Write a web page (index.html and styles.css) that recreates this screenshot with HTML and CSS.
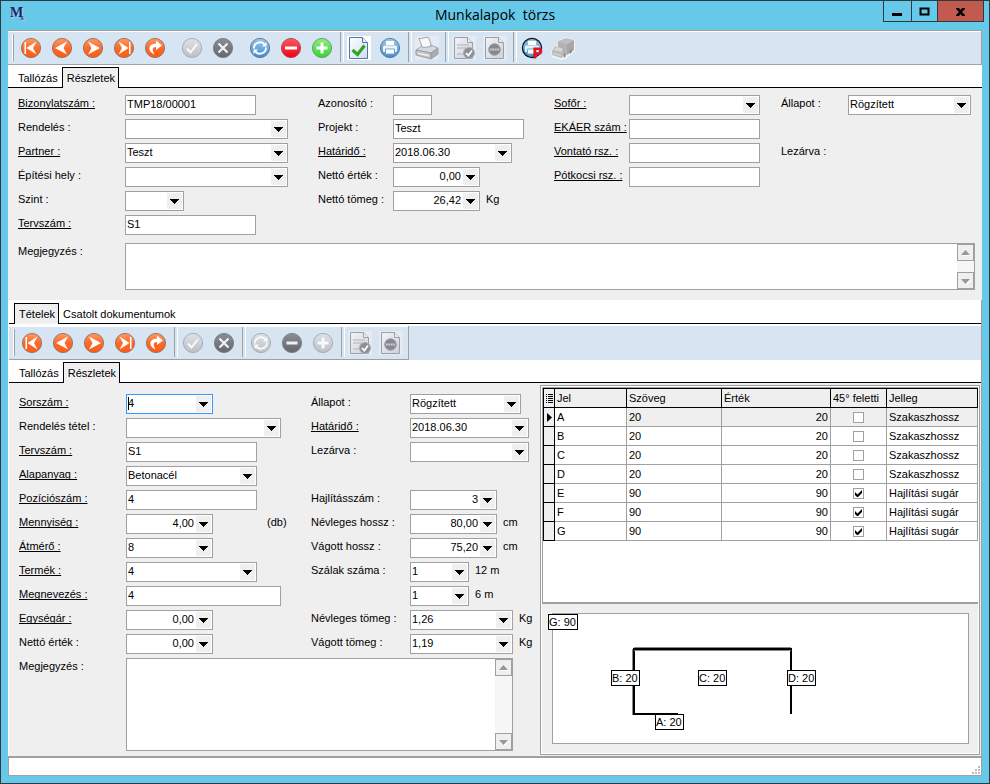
FILE: index.html
```html
<!DOCTYPE html>
<html lang="hu">
<head>
  <meta charset="UTF-8">
  <meta name="viewport" content="width=device-width, initial-scale=1.0">
  <title>Munkalapok törzs</title>
  <link rel="stylesheet" href="styles.css">
</head>
<body>
<!-- Icon sprite -->
<svg class="sprite" width="0" height="0" aria-hidden="true">
  <defs>
    <linearGradient id="g-orange" x1="0" y1="0" x2="0" y2="1"><stop offset="0" stop-color="#ff9a62"/><stop offset="0.5" stop-color="#fb6a2c"/><stop offset="1" stop-color="#ff5a10"/></linearGradient>
    <linearGradient id="g-light" x1="0" y1="0" x2="0" y2="1"><stop offset="0" stop-color="#dfe2e6"/><stop offset="1" stop-color="#bcc0c5"/></linearGradient>
    <linearGradient id="g-dark" x1="0" y1="0" x2="0" y2="1"><stop offset="0" stop-color="#8b8f95"/><stop offset="1" stop-color="#63676d"/></linearGradient>
    <linearGradient id="g-blue" x1="0" y1="0" x2="0" y2="1"><stop offset="0" stop-color="#9cc8ef"/><stop offset="1" stop-color="#3f8bd3"/></linearGradient>
    <linearGradient id="g-red" x1="0" y1="0" x2="0" y2="1"><stop offset="0" stop-color="#ff5b66"/><stop offset="1" stop-color="#f2000f"/></linearGradient>
    <linearGradient id="g-green" x1="0" y1="0" x2="0" y2="1"><stop offset="0" stop-color="#8fee84"/><stop offset="1" stop-color="#34d332"/></linearGradient>
    <linearGradient id="g-page" x1="0" y1="0" x2="1" y2="1"><stop offset="0" stop-color="#ffffff"/><stop offset="1" stop-color="#cfdcf0"/></linearGradient>
    <linearGradient id="g-gray-page" x1="0" y1="0" x2="1" y2="1"><stop offset="0" stop-color="#f2f4f7"/><stop offset="1" stop-color="#cdd1d8"/></linearGradient>
  </defs>
  <symbol id="i-first" viewBox="0 0 24 24">
    <circle cx="12" cy="12" r="9.6" fill="url(#g-orange)" stroke="#8f7263" stroke-width="0.9"/>
    <path d="M5.500 6h1.500v12H5.500zM7.500 12l10-6.500-3.500 6.500 3.500 6.500z" fill="#fff"/>
  </symbol>
  <symbol id="i-prev" viewBox="0 0 24 24">
    <circle cx="12" cy="12" r="9.6" fill="url(#g-orange)" stroke="#8f7263" stroke-width="0.9"/>
    <path d="M5 12l12-6.500-3.500 6.500 3.500 6.500z" fill="#fff"/>
  </symbol>
  <symbol id="i-next" viewBox="0 0 24 24">
    <circle cx="12" cy="12" r="9.6" fill="url(#g-orange)" stroke="#8f7263" stroke-width="0.9"/>
    <path d="M19 12L7 5.500l3.500 6.500L7 18.500z" fill="#fff"/>
  </symbol>
  <symbol id="i-last" viewBox="0 0 24 24">
    <circle cx="12" cy="12" r="9.6" fill="url(#g-orange)" stroke="#8f7263" stroke-width="0.9"/>
    <path d="M17 6h1.500v12H17zM16.500 12L6.500 5.500 10 12l-3.500 6.500z" fill="#fff"/>
  </symbol>
  <symbol id="i-redo" viewBox="0 0 24 24">
    <circle cx="12" cy="12" r="9.6" fill="url(#g-orange)" stroke="#8f7263" stroke-width="0.9"/>
    <path d="M13 4.500l6 5-6 4.500v-3c-4 0-4 3-1.500 7.500C5 16 4 8 13 7.500z" fill="#fff"/>
  </symbol>
  <symbol id="i-ok" viewBox="0 0 24 24">
    <circle cx="12" cy="12" r="9.6" fill="url(#g-light)" stroke="#a3a8ae" stroke-width="0.9"/>
    <path d="M7 12.500l3.500 4L17 8" fill="none" stroke="#f8fafc" stroke-width="2"/>
  </symbol>
  <symbol id="i-cancel" viewBox="0 0 24 24">
    <circle cx="12" cy="12" r="9.600" fill="url(#g-dark)" stroke="#777b80" stroke-width="0.9"/>
    <path d="M7.500 7.500l9 9M16.500 7.500l-9 9" fill="none" stroke="#eef3f9" stroke-width="2.200"/>
  </symbol>
  <symbol id="i-refresh" viewBox="0 0 24 24">
    <circle cx="12" cy="12" r="9.600" fill="url(#g-blue)" stroke="#5b7085" stroke-width="0.9"/>
    <path d="M6 12.500a6 6 0 0 1 11-3.500M18 11.500a6 6 0 0 1-11 3.500" fill="none" stroke="#fff" stroke-width="1.800"/>
    <path d="M18.500 6v4.500H14zM5.500 18v-4.500H10z" fill="#fff"/>
  </symbol>
  <symbol id="i-refresh-off" viewBox="0 0 24 24">
    <circle cx="12" cy="12" r="9.600" fill="url(#g-light)" stroke="#a3a8ae" stroke-width="0.9"/>
    <path d="M6 12.500a6 6 0 0 1 11-3.500M18 11.500a6 6 0 0 1-11 3.500" fill="none" stroke="#f8fafc" stroke-width="1.800"/>
    <path d="M18.500 6v4.500H14zM5.500 18v-4.500H10z" fill="#f8fafc"/>
  </symbol>
  <symbol id="i-minus" viewBox="0 0 24 24">
    <circle cx="12" cy="12" r="9.600" fill="url(#g-red)" stroke="#9a4a50" stroke-width="0.9"/>
    <path d="M6 10.500h12v3H6z" fill="#fff"/>
  </symbol>
  <symbol id="i-minus-off" viewBox="0 0 24 24">
    <circle cx="12" cy="12" r="9.600" fill="url(#g-dark)" stroke="#777b80" stroke-width="0.9"/>
    <path d="M6.500 10.500h11v3h-11z" fill="#eef3f9"/>
  </symbol>
  <symbol id="i-plus" viewBox="0 0 24 24">
    <circle cx="12" cy="12" r="9.600" fill="url(#g-green)" stroke="#5d9a5a" stroke-width="0.9"/>
    <path d="M10.500 6.500h3v4h4v3h-4v4h-3v-4h-4v-3h4z" fill="#fff"/>
  </symbol>
  <symbol id="i-plus-off" viewBox="0 0 24 24">
    <circle cx="12" cy="12" r="9.600" fill="url(#g-light)" stroke="#a3a8ae" stroke-width="0.9"/>
    <path d="M10.500 6.500h3v4h4v3h-4v4h-3v-4h-4v-3h4z" fill="#f8fafc"/>
  </symbol>
  <symbol id="i-page-ok" viewBox="0 0 24 24">
    <path d="M0 0h24v24H0z" fill="#fff"/>
    <path d="M2.500 1.500h13l5 5v16h-18z" fill="url(#g-page)" stroke="#5a74a0"/>
    <path d="M15.500 1.500v5h5" fill="#e9f0fa" stroke="#5a74a0"/>
    <path d="M5.500 14l5 4.500 7-9" fill="none" stroke="#2ea521" stroke-width="3.200"/>
  </symbol>
  <symbol id="i-print" viewBox="0 0 24 24">
    <circle cx="12" cy="12" r="9.600" fill="url(#g-blue)" stroke="#5b7085" stroke-width="0.9"/>
    <path d="M8 5h8v4H8z" fill="#fff"/>
    <path d="M6.500 9.500h11a1.500 1.500 0 0 1 1.500 1.500v4a1 1 0 0 1-1 1h-12a1 1 0 0 1-1-1v-4a1.500 1.500 0 0 1 1.500-1.500z" fill="#e8f3fc"/>
    <path d="M7.500 13h9v5h-9z" fill="#fff" stroke="#6aa5dc"/>
  </symbol>
  <symbol id="i-printer" viewBox="0 0 24 24">
    <path d="M0 0h24v24H0z" fill="#e6ebf3"/>
    <path d="M4 2.500C8 3 10 .5 13.500 1.500L17 11 7.500 12z" fill="#f7f8fa" stroke="#a0a4aa"/>
    <path d="M1 14l6-4 1 1.500 8-1-.5-1.500 7.500 3-7 5z" fill="#d7d9dc" stroke="#a5a9af"/>
    <path d="M1 14l15 3v6L1 19z" fill="#c1c4c9" stroke="#9a9ea4"/>
    <path d="M16 17l7-5v6l-7 5z" fill="#a9acb1" stroke="#9a9ea4"/>
    <path d="M3 16.500l11 2.500v1.500L3 18z" fill="#eeeff1"/>
  </symbol>
  <symbol id="i-page-check" viewBox="0 0 24 24">
    <path d="M0 0h24v24H0z" fill="#e6ebf3"/>
    <path d="M2.500 1.500h13l5 5v16h-18z" fill="url(#g-gray-page)" stroke="#9ba0a8"/>
    <path d="M15.500 1.500v5h5" fill="#e9ecf1" stroke="#9ba0a8"/>
    <path d="M5 9h12M5 12h9M5 18h6" stroke="#bfc3c9" stroke-width="1.500"/>
    <circle cx="17" cy="17" r="5.500" fill="#8b9098" stroke="#a9adb3"/>
    <path d="M14 17l2.300 2.500L20 14.500" fill="none" stroke="#fff" stroke-width="1.800"/>
  </symbol>
  <symbol id="i-page-stop" viewBox="0 0 24 24">
    <path d="M0 0h24v24H0z" fill="#e6ebf3"/>
    <path d="M2.500 1.500h13l5 5v16h-18z" fill="url(#g-gray-page)" stroke="#9ba0a8"/>
    <path d="M15.500 1.500v5h5" fill="#e9ecf1" stroke="#9ba0a8"/>
    <circle cx="11.500" cy="13.500" r="5.800" fill="#84888f" stroke="#9ea2a8"/>
    <path d="M7 12.500h9v2H7z" fill="#c9ccd0"/>
    <path d="M9 12.500v2M11.500 12.500v2M14 12.500v2" stroke="#84888f" stroke-width=".6"/>
  </symbol>
  <symbol id="i-print-p" viewBox="0 0 24 24">
    <circle cx="12" cy="12" r="9.600" fill="url(#g-blue)" stroke="#111" stroke-width="1.200"/>
    <path d="M8 5h8v4H8z" fill="#fff"/>
    <path d="M6.500 9.500h11a1.500 1.500 0 0 1 1.500 1.500v4a1 1 0 0 1-1 1h-12a1 1 0 0 1-1-1v-4a1.500 1.500 0 0 1 1.500-1.500z" fill="#e8f3fc"/>
    <path d="M7.500 13h7v5h-7z" fill="#fff" stroke="#6aa5dc"/>
    <text x="13" y="22" font-size="14" font-weight="bold" fill="#e5101d" stroke="#e5101d" stroke-width=".8">P</text>
  </symbol>
  <symbol id="i-truck" viewBox="0 0 24 24">
    <path d="M7 4l8-3 9 3v11l-9 8-5 1-9-3-1-5 3-6 4-1z" fill="#f4f4f4"/>
    <path d="M7 5l8-3 8 2-7 4z" fill="#bdbdbd"/>
    <path d="M16 8l7-4v10l-7 5z" fill="#a6a6a6"/>
    <path d="M7 5l9 3v11l-9-3z" fill="#b2b2b2"/>
    <path d="M1 15l3-5 8 2v9l-2 1-9-3z" fill="#bcbcbc"/>
    <path d="M3 14l2-3 6 1.500v3z" fill="#d8d8d8"/>
    <path d="M2 17l8 2v1l-8-2z" fill="#dedede"/>
    <path d="M12 18l2-1 1 3-2 2zM18 15l3-2v3l-2 2z" fill="#8e8e8e"/>
  </symbol>
  <symbol id="i-up" viewBox="0 0 10 10"><path d="M1 8h9L5.500 3z" fill="#fff"/><path d="M0 7h9L4.500 2z" fill="#989898"/></symbol>
  <symbol id="i-down" viewBox="0 0 10 10"><path d="M1 4h9L5.500 9z" fill="#fff"/><path d="M0 3h9L4.500 8z" fill="#989898"/></symbol>
</svg>

<div class="window">
  <header class="titlebar">
    <div class="app-icon" aria-hidden="true">M<small>s</small></div>
    <h1 class="title">Munkalapok  törzs</h1>
    <div class="window-buttons">
      <button class="win-btn win-min" aria-label="Kis méret"><svg width="11" height="11"><path d="M0 7h10v3H0z"/></svg></button>
      <button class="win-btn win-max" aria-label="Teljes méret"><svg width="11" height="11"><path d="M1.500 2.500h8v6h-8z" fill="none" stroke="#000" stroke-width="2"/></svg></button>
      <button class="win-btn win-close" aria-label="Bezárás"><svg width="11" height="11"><path d="M1 2h3l1.500 2L7 2h3v1L7 6l3 3v1H7L5.500 8 4 10H1V9l3-3-3-3z"/></svg></button>
    </div>
  </header>

  <main class="client">
    <!-- Main toolbar -->
    <div class="toolbar" role="toolbar" aria-label="Munkalap">
      <span class="grip"></span>
      <button class="tool" aria-label="Első"><svg><use href="#i-first"/></svg></button>
      <button class="tool" aria-label="Előző"><svg><use href="#i-prev"/></svg></button>
      <button class="tool" aria-label="Következő"><svg><use href="#i-next"/></svg></button>
      <button class="tool" aria-label="Utolsó"><svg><use href="#i-last"/></svg></button>
      <button class="tool" aria-label="Vissza"><svg><use href="#i-redo"/></svg></button>
      <span class="space"></span>
      <button class="tool" aria-label="Rendben"><svg><use href="#i-ok"/></svg></button>
      <button class="tool" aria-label="Mégsem"><svg><use href="#i-cancel"/></svg></button>
      <span class="space"></span>
      <button class="tool" aria-label="Frissítés"><svg><use href="#i-refresh"/></svg></button>
      <button class="tool" aria-label="Törlés"><svg><use href="#i-minus"/></svg></button>
      <button class="tool" aria-label="Új"><svg><use href="#i-plus"/></svg></button>
      <span class="space line"></span>
      <button class="tool" aria-label="Jóváhagyás"><svg><use href="#i-page-ok"/></svg></button>
      <button class="tool" aria-label="Nyomtatás"><svg><use href="#i-print"/></svg></button>
      <span class="space line"></span>
      <button class="tool" aria-label="Nyomtató"><svg><use href="#i-printer"/></svg></button>
      <span class="space line"></span>
      <button class="tool" aria-label="Lezárás"><svg><use href="#i-page-check"/></svg></button>
      <button class="tool" aria-label="Leállítás"><svg><use href="#i-page-stop"/></svg></button>
      <span class="space line"></span>
      <button class="tool" aria-label="Nyomtatás P"><svg><use href="#i-print-p"/></svg></button>
      <button class="tool" aria-label="Szállítás"><svg><use href="#i-truck"/></svg></button>
    </div>

    <div class="tabs" role="tablist">
      <button class="tab" role="tab">Tallózás</button>
      <button class="tab active" role="tab" aria-selected="true">Részletek</button>
    </div>

    <!-- Header form -->
    <form class="head-form">
      <div class="head-columns">
        <div class="fields">
          <div class="field"><label class="key" for="bizonylat">Bizonylatszám :</label><input class="w-131" id="bizonylat" type="text" value="TMP18/00001"></div>
          <div class="field"><label for="rendeles">Rendelés :</label><select class="w-163" id="rendeles"><option></option></select></div>
          <div class="field"><label class="key" for="partner">Partner :</label><select class="w-163" id="partner"><option>Teszt</option></select></div>
          <div class="field"><label for="hely">Építési hely :</label><select class="w-163" id="hely"><option></option></select></div>
          <div class="field"><label for="szint">Szint :</label><select class="w-59" id="szint"><option></option></select></div>
          <div class="field"><label class="key" for="tervszam">Tervszám :</label><input class="w-131" id="tervszam" type="text" value="S1"></div>
        </div>
        <div class="fields narrow">
          <div class="field"><label for="azonosito">Azonosító :</label><input class="w-39" id="azonosito" type="text"></div>
          <div class="field"><label for="projekt">Projekt :</label><input class="w-131" id="projekt" type="text" value="Teszt"></div>
          <div class="field"><label class="key" for="hatarido">Határidő :</label><select class="w-119" id="hatarido"><option>2018.06.30</option></select></div>
          <div class="field"><label for="netto">Nettó érték :</label><select class="w-87 num" id="netto"><option>0,00</option></select></div>
          <div class="field"><label for="tomeg">Nettó tömeg :</label><select class="w-87 num" id="tomeg"><option>26,42</option></select><span class="unit">Kg</span></div>
        </div>
        <div class="fields narrow">
          <div class="field"><label class="key" for="sofor">Sofőr :</label><select class="w-131" id="sofor"><option></option></select></div>
          <div class="field"><label class="key" for="ekaer">EKÁER szám :</label><input class="w-131" id="ekaer" type="text"></div>
          <div class="field"><label class="key" for="vontato">Vontató rsz. :</label><input class="w-131" id="vontato" type="text"></div>
          <div class="field"><label class="key" for="potkocsi">Pótkocsi rsz. :</label><input class="w-131" id="potkocsi" type="text"></div>
        </div>
        <div class="fields state">
          <div class="field"><label for="allapot">Állapot :</label><select class="w-123" id="allapot"><option>Rögzített</option></select></div>
          <div class="field"></div>
          <div class="field"><span class="caption">Lezárva :</span></div>
        </div>
      </div>
      <div class="note">
        <label for="megjegyzes">Megjegyzés :</label>
        <div class="memo">
          <textarea id="megjegyzes"></textarea>
          <div class="scroll">
            <button type="button" aria-label="Fel"><svg><use href="#i-up"/></svg></button>
            <button type="button" aria-label="Le"><svg><use href="#i-down"/></svg></button>
          </div>
        </div>
      </div>
    </form>

    <!-- Items -->
    <section class="items">
      <div class="tabs" role="tablist">
        <button class="tab active" role="tab" aria-selected="true">Tételek</button>
        <button class="tab" role="tab">Csatolt dokumentumok</button>
      </div>
      <div class="toolbar-strip">
        <div class="toolbar" role="toolbar" aria-label="Tételek">
          <span class="grip"></span>
          <button class="tool" aria-label="Első"><svg><use href="#i-first"/></svg></button>
          <button class="tool" aria-label="Előző"><svg><use href="#i-prev"/></svg></button>
          <button class="tool" aria-label="Következő"><svg><use href="#i-next"/></svg></button>
          <button class="tool" aria-label="Utolsó"><svg><use href="#i-last"/></svg></button>
          <button class="tool" aria-label="Vissza"><svg><use href="#i-redo"/></svg></button>
          <span class="space line"></span>
          <button class="tool" aria-label="Rendben"><svg><use href="#i-ok"/></svg></button>
          <button class="tool" aria-label="Mégsem"><svg><use href="#i-cancel"/></svg></button>
          <span class="space line"></span>
          <button class="tool" aria-label="Frissítés"><svg><use href="#i-refresh-off"/></svg></button>
          <button class="tool" aria-label="Törlés"><svg><use href="#i-minus-off"/></svg></button>
          <button class="tool" aria-label="Új"><svg><use href="#i-plus-off"/></svg></button>
          <span class="space line"></span>
          <button class="tool" aria-label="Lezárás"><svg><use href="#i-page-check"/></svg></button>
          <button class="tool" aria-label="Leállítás"><svg><use href="#i-page-stop"/></svg></button>
        </div>
      </div>
      <div class="tabs" role="tablist">
        <button class="tab" role="tab">Tallózás</button>
        <button class="tab active" role="tab" aria-selected="true">Részletek</button>
      </div>

      <div class="details">
        <form class="item-form">
          <div class="item-columns">
            <div class="fields">
              <div class="field"><label class="key" for="sorszam">Sorszám :</label><select class="w-87 current" id="sorszam"><option>4</option></select></div>
              <div class="field"><label for="rtetel">Rendelés tétel :</label><select class="w-155" id="rtetel"><option></option></select></div>
              <div class="field"><label class="key" for="t-terv">Tervszám :</label><input class="w-131" id="t-terv" type="text" value="S1"></div>
              <div class="field"><label class="key" for="alapanyag">Alapanyag :</label><select class="w-131" id="alapanyag"><option>Betonacél</option></select></div>
              <div class="field"><label class="key" for="pozicio">Pozíciószám :</label><input class="w-131" id="pozicio" type="text" value="4"></div>
              <div class="field"><label class="key" for="mennyiseg">Mennyiség :</label><select class="w-87 num" id="mennyiseg"><option>4,00</option></select><span class="unit far">(db)</span></div>
              <div class="field"><label class="key" for="atmero">Átmérő :</label><select class="w-87" id="atmero"><option>8</option></select></div>
              <div class="field"><label class="key" for="termek">Termék :</label><select class="w-131" id="termek"><option>4</option></select></div>
              <div class="field"><label class="key" for="megnevezes">Megnevezés :</label><input class="w-155" id="megnevezes" type="text" value="4"></div>
              <div class="field"><label class="key" for="egysegar">Egységár :</label><select class="w-87 num" id="egysegar"><option>0,00</option></select></div>
              <div class="field"><label for="t-netto">Nettó érték :</label><select class="w-87 num" id="t-netto"><option>0,00</option></select></div>
            </div>
            <div class="fields medium">
              <div class="field"><label for="t-allapot">Állapot :</label><select class="w-111" id="t-allapot"><option>Rögzített</option></select></div>
              <div class="field"><label class="key" for="t-hatarido">Határidő :</label><select class="w-119" id="t-hatarido"><option>2018.06.30</option></select></div>
              <div class="field"><label for="lezarva">Lezárva :</label><select class="w-119" id="lezarva"><option></option></select></div>
              <div class="field"></div>
              <div class="field"><label for="hajlitas">Hajlításszám :</label><select class="w-87 num" id="hajlitas"><option>3</option></select></div>
              <div class="field"><label for="nhossz">Névleges hossz :</label><select class="w-87 num" id="nhossz"><option>80,00</option></select><span class="unit">cm</span></div>
              <div class="field"><label for="vhossz">Vágott hossz :</label><select class="w-87 num" id="vhossz"><option>75,20</option></select><span class="unit">cm</span></div>
              <div class="field"><label for="szal12">Szálak száma :</label><select class="w-59" id="szal12"><option>1</option></select><span class="unit">12 m</span></div>
              <div class="field"><label for="szal6" aria-label="Szálak száma 6 m"></label><select class="w-59" id="szal6"><option>1</option></select><span class="unit">6 m</span></div>
              <div class="field"><label for="ntomeg">Névleges tömeg :</label><select class="w-103" id="ntomeg"><option>1,26</option></select><span class="unit">Kg</span></div>
              <div class="field"><label for="vtomeg">Vágott tömeg :</label><select class="w-103" id="vtomeg"><option>1,19</option></select><span class="unit">Kg</span></div>
            </div>
          </div>
          <div class="note">
            <label for="t-megj">Megjegyzés :</label>
            <div class="memo">
              <textarea id="t-megj"></textarea>
              <div class="scroll">
                <button type="button" aria-label="Fel"><svg><use href="#i-up"/></svg></button>
                <button type="button" aria-label="Le"><svg><use href="#i-down"/></svg></button>
              </div>
            </div>
          </div>
        </form>

        <div class="side">
          <div class="grid-box">
            <table class="grid">
              <colgroup>
                <col class="c-mark"><col class="c-jel"><col class="c-szoveg"><col class="c-ertek"><col class="c-feletti"><col>
              </colgroup>
              <thead>
                <tr><th class="mark"><svg width="7" height="11"><path d="M0 1.500h1M2 1.500h5M0 3.500h1M2 3.500h5M0 5.500h1M2 5.500h5M0 7.500h1M2 7.500h5M0 9.500h1M2 9.500h5" stroke="#000"/></svg></th><th>Jel</th><th>Szöveg</th><th>Érték</th><th>45° feletti</th><th>Jelleg</th></tr>
              </thead>
              <tbody>
                <tr class="selected"><td class="mark"><svg width="5" height="9"><path d="M0 0l5 4.500L0 9z"/></svg></td><td class="cell">A</td><td>20</td><td class="right">20</td><td class="tick"><input type="checkbox" aria-label="A 45° feletti"></td><td>Szakaszhossz</td></tr>
                <tr><td class="mark"></td><td>B</td><td>20</td><td class="right">20</td><td class="tick"><input type="checkbox" aria-label="B 45° feletti"></td><td>Szakaszhossz</td></tr>
                <tr><td class="mark"></td><td>C</td><td>20</td><td class="right">20</td><td class="tick"><input type="checkbox" aria-label="C 45° feletti"></td><td>Szakaszhossz</td></tr>
                <tr><td class="mark"></td><td>D</td><td>20</td><td class="right">20</td><td class="tick"><input type="checkbox" aria-label="D 45° feletti"></td><td>Szakaszhossz</td></tr>
                <tr><td class="mark"></td><td>E</td><td>90</td><td class="right">90</td><td class="tick"><input type="checkbox" aria-label="E 45° feletti" checked></td><td>Hajlítási sugár</td></tr>
                <tr><td class="mark"></td><td>F</td><td>90</td><td class="right">90</td><td class="tick"><input type="checkbox" aria-label="F 45° feletti" checked></td><td>Hajlítási sugár</td></tr>
                <tr><td class="mark"></td><td>G</td><td>90</td><td class="right">90</td><td class="tick"><input type="checkbox" aria-label="G 45° feletti" checked></td><td>Hajlítási sugár</td></tr>
              </tbody>
            </table>
          </div>
          <!-- Bent bar sketch -->
          <div class="sketch">
            <svg class="bar" width="300" height="128">
              <path d="M125 100H81V35H238V100" fill="none" stroke="#000" stroke-width="2"/>
              <path d="M81 33.500H238M81 36.500H238M79.500 35V101" stroke="#888"/>
            </svg>
            <span class="tag tag-g">G: 90</span>
            <span class="tag tag-b">B: 20</span>
            <span class="tag tag-c">C: 20</span>
            <span class="tag tag-d">D: 20</span>
            <span class="tag tag-a">A: 20</span>
          </div>
        </div>
      </div>
    </section>

    <footer class="statusbar">
      <svg width="9" height="9"><path d="M6 0h2v2H6zM3 3h2v2H3zM6 3h2v2H6zM0 6h2v2H0zM3 6h2v2H3zM6 6h2v2H6z" fill="#bdbdbd"/></svg>
    </footer>
  </main>
</div>
</body>
</html>
```

FILE: styles.css
```css
* {
  box-sizing: border-box;
}

body {
  margin: 0;
  font-family: "Liberation Sans", Arial, sans-serif;
  font-size: 11px;
  color: #000;
}

button, input, select, textarea {
  font: inherit;
  color: inherit;
  margin: 0;
  border-radius: 0;
  outline: none;
}

.sprite {
  position: absolute;
}

/* Window frame */
.window {
  min-height: 100vh;
  display: flex;
  flex-direction: column;
  padding: 0 7px 7px;
  border: 1px solid #2f3a40;
  background: #66c9e9;
}

.titlebar {
  display: grid;
  grid-template-columns: 1fr auto 1fr;
  height: 29px;
}

.app-icon {
  padding: 4px 0 0 2px;
  font: bold 14px/16px "Liberation Serif", serif;
  color: #1d2466;
  text-shadow: 1px 1px 1px #c4cbe6;
}

.app-icon small {
  margin-left: -3px;
  font-size: 9px;
  vertical-align: -3px;
  color: #3c4380;
}

.title {
  margin: 0;
  font: 14px/28px "Open Sans", "Segoe UI", sans-serif;
  white-space: pre;
}

.window-buttons {
  display: flex;
  justify-content: flex-end;
  align-items: flex-start;
  margin-right: -2px;
}

.win-btn {
  display: flex;
  align-items: center;
  justify-content: center;
  height: 21px;
  padding: 0;
  border: 1px solid #2f3a40;
  border-width: 0 0 1px 1px;
  background: none;
}

.win-min {
  width: 28px;
}

.win-max {
  width: 26px;
}

.win-close {
  width: 47px;
  border-right-width: 1px;
  background: #c35a50;
}

.client {
  flex: 1;
  display: flex;
  flex-direction: column;
  background: #efefef;
}

/* Toolbars */
.toolbar {
  display: flex;
  height: 35px;
  padding: 0 4px;
  border: 1px solid #a0a0a0;
  border-left-width: 0;
  background: #d7e4f2;
  box-shadow: inset 0 1px #fff;
}

.toolbar-strip {
  padding-top: 2px;
  background: linear-gradient(#fff 2px, #d7e4f2 2px);
}

.toolbar-strip .toolbar {
  width: 400px;
  height: 34px;
  border-top: 0;
}

.grip {
  width: 2px;
  margin: 3px 2px 3px 0;
  border-left: 1px solid #fff;
  border-right: 1px solid #a0a0a0;
}

.tool {
  flex: none;
  display: flex;
  align-items: center;
  width: 31px;
  padding: 0 4px 0 3px;
  border: 0;
  background: none;
}

.tool svg {
  width: 24px;
  height: 24px;
}

.space {
  flex: none;
  width: 6px;
  padding-left: 2px;
}

.space.line::before {
  content: "";
  display: block;
  width: 2px;
  height: 30px;
  margin-top: 1px;
  border-left: 1px solid #a0a0a0;
  border-right: 1px solid #fff;
}

/* Tabs */
.tabs {
  display: flex;
  align-items: flex-end;
  height: 23px;
  padding-left: 5px;
  border-bottom: 1px solid #000;
  background: #fff;
}

.tab {
  height: 21px;
  margin-bottom: -1px;
  padding: 0 3px 0 4px;
  border: 1px solid transparent;
  border-bottom: 0;
  background: none;
}

.tab.active {
  border-color: #000;
  background: #efefef;
}

.tab.active + .tab {
  padding-left: 3px;
}

/* Form fields */
.fields {
  display: flex;
  flex-direction: column;
  gap: 4px;
}

.field {
  display: flex;
  height: 20px;
}

label, .unit, .caption {
  line-height: 17px;
  white-space: nowrap;
}

label {
  flex: none;
  width: 107px;
}

.narrow label {
  width: 75px;
}

.medium label {
  width: 99px;
}

.state label {
  width: 67px;
}

.key {
  text-decoration: underline;
  text-decoration-skip-ink: none;
  text-underline-offset: 1px;
}

.unit {
  margin-left: 6px;
}

.unit.far {
  margin-left: 54px;
}

input[type="text"], select {
  height: 20px;
  padding: 0 2px 2px 1px;
  border: 1px solid #a0a0a0;
  background: #fff;
}

select {
  appearance: none;
  padding-right: 18px;
  background: #fff url("data:image/svg+xml,%3Csvg xmlns='http://www.w3.org/2000/svg' width='15' height='16'%3E%3Cpath d='M0 0h15v16H0z' fill='%23efefef'/%3E%3Cpath d='M3 6h9v1h-1v1h-1v1H9v1H8v1H7v-1H6V9H5V8H4V7H3z'/%3E%3C/svg%3E") no-repeat right 1px top 1px;
}

.num {
  text-align: right;
  text-align-last: right;
}

/* Focused editor with its caret */
select.current {
  border-color: #3399ff;
  background-image: url("data:image/svg+xml,%3Csvg xmlns='http://www.w3.org/2000/svg' width='15' height='16'%3E%3Cpath d='M0 0h15v16H0z' fill='%23efefef'/%3E%3Cpath d='M3 6h9v1h-1v1h-1v1H9v1H8v1H7v-1H6V9H5V8H4V7H3z'/%3E%3C/svg%3E"), linear-gradient(#000, #000);
  background-position: right 1px top 1px, 1px 2px;
  background-size: auto, 1px 13px;
}

.w-39 { width: 39px; }
.w-59 { width: 59px; }
.w-87 { width: 87px; }
.w-103 { width: 103px; }
.w-111 { width: 111px; }
.w-119 { width: 119px; }
.w-123 { width: 123px; }
.w-131 { width: 131px; }
.w-155 { width: 155px; }
.w-163 { width: 163px; }

.head-form {
  padding: 7px 7px 10px 10px;
}

.head-columns {
  display: grid;
  grid-template-columns: 300px 236px 227px 1fr;
}

.note {
  display: flex;
  margin-top: 8px;
}

.memo {
  flex: 1;
  display: flex;
  min-height: 47px;
  border: 1px solid #a0a0a0;
  background: #fff;
}

.memo textarea {
  flex: 1;
  min-width: 0;
  height: auto;
  padding: 2px;
  border: 0;
  resize: none;
}

.scroll {
  display: flex;
  flex-direction: column;
  justify-content: space-between;
  width: 17px;
  background: #f6f6f6;
}

.scroll button {
  display: flex;
  align-items: center;
  justify-content: center;
  width: 17px;
  height: 17px;
  padding: 0;
  border: 1px solid #a0a0a0;
  background: #efefef;
}

.scroll svg {
  width: 10px;
  height: 10px;
}

/* Items section */
.items {
  flex: 1;
  display: flex;
  flex-direction: column;
  border-left: 1px solid #fff;
  border-right: 1px solid #a0a0a0;
}

.items .tabs:first-child {
  height: 24px;
}

.details {
  flex: 1;
  display: flex;
}

.item-form {
  flex: none;
  display: flex;
  flex-direction: column;
  width: 531px;
  padding: 11px 27px 5px 10px;
}

.item-columns {
  display: grid;
  grid-template-columns: 292px 1fr;
}

.item-form .note {
  flex: 1;
  margin-top: 4px;
}

.side {
  flex: 1;
  display: flex;
  flex-direction: column;
  min-width: 0;
  margin: 2px 1px 1px 0;
  border: 1px solid #a0a0a0;
  outline: 1px solid #fff;
  outline-offset: -2px;
}

.grid-box {
  flex: 1;
  margin: 1px 0 0 1px;
  border: 1px solid #a0a0a0;
  border-bottom-width: 2px;
  background: #fff;
}

.grid {
  width: 100%;
  table-layout: fixed;
  border-collapse: collapse;
}

.c-mark { width: 11px; }
.c-jel { width: 72px; }
.c-szoveg { width: 95px; }
.c-ertek { width: 109px; }
.c-feletti { width: 56px; }

.grid th, .grid td {
  height: 19px;
  padding: 0 2px;
  border: 1px solid #a0a0a0;
  font-weight: normal;
  text-align: left;
  line-height: 12px;
  white-space: nowrap;
}

.grid th {
  border-color: #000;
  background: #efefef;
}

.grid .mark {
  padding: 0;
  border-color: #000;
  background: #efefef;
}

.mark svg {
  display: block;
  margin: 0 auto;
}

.grid .right {
  text-align: right;
}

.grid .tick {
  text-align: center;
}

.grid .selected td {
  background: #efefef;
}

.grid .selected .cell {
  background: #fff;
}

.tick input {
  appearance: none;
  display: block;
  width: 11px;
  height: 11px;
  margin: 0 auto;
  border: 1px solid #a0a0a0;
  background: #fff;
}

.tick input:checked {
  background: #fff url("data:image/svg+xml,%3Csvg xmlns='http://www.w3.org/2000/svg' width='9' height='9'%3E%3Cpath d='M1 3v3l2 2h1l4-4V1L3.500 5.500z'/%3E%3C/svg%3E") no-repeat;
}

/* Sketch canvas, tags sit on the drawing */
.sketch {
  position: relative;
  height: 131px;
  margin: 9px 10px 10px 11px;
  border: 1px solid #a0a0a0;
  background: #fff;
}

.bar {
  display: block;
}

.tag {
  position: absolute;
  padding: 1px 1px 1px 0;
  border: 1px solid #000;
  background: #fff;
  line-height: 12px;
  white-space: nowrap;
}

.tag-g { left: -5px; top: 0; }
.tag-b { left: 58px; top: 56px; }
.tag-c { left: 145px; top: 56px; }
.tag-d { left: 234px; top: 56px; }
.tag-a { left: 102px; top: 100px; }

.statusbar {
  display: flex;
  align-items: flex-end;
  justify-content: flex-end;
  height: 20px;
  border: 1px solid #a0a0a0;
  border-top-width: 2px;
  background: #fff;
}
```
